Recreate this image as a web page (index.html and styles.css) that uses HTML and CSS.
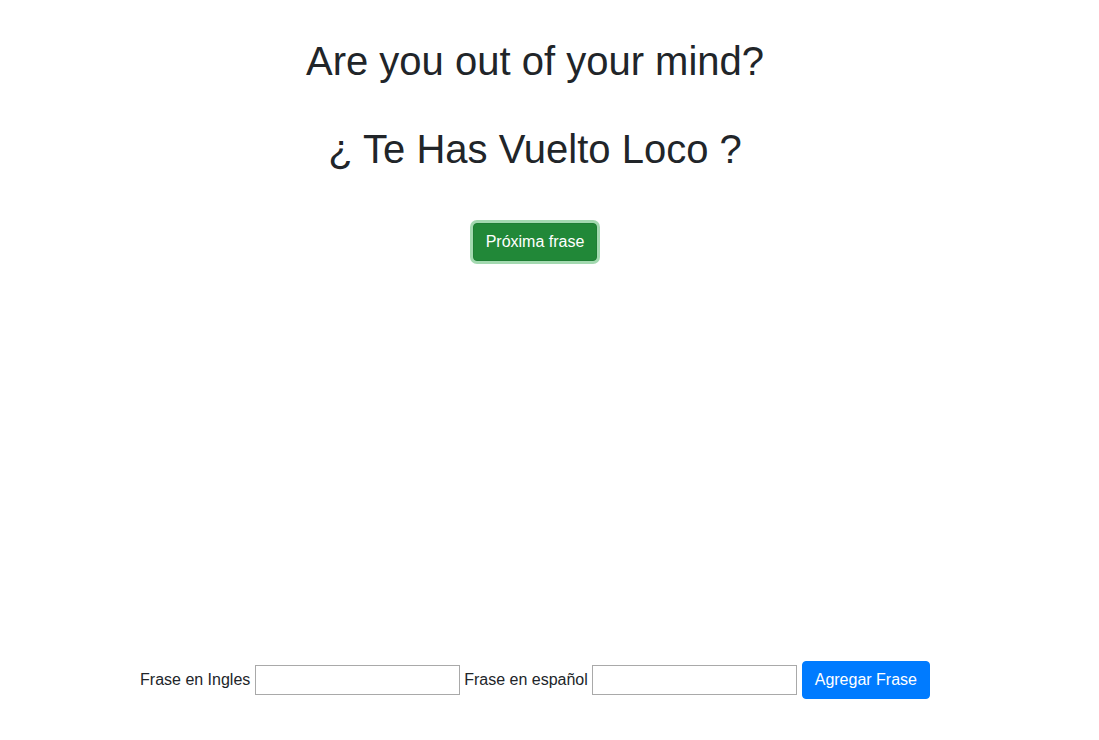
FILE: index.html
```html
<!DOCTYPE html>
<html lang="es">
<head>
<meta charset="utf-8">
<title>Frases</title>
<link rel="stylesheet" href="styles.css">
</head>
<body>
<div class="page">
  <main class="phrase">
    <h1 class="title">Are you out of your mind?</h1>
    <h1 class="title title-es">¿ Te Has Vuelto Loco ?</h1>
    <button class="btn btn-success" type="button">Próxima frase</button>
  </main>
  <form class="add-form">
    <label for="en">Frase en Ingles</label>
    <input id="en" type="text" class="field">
    <label for="es">Frase en español</label>
    <input id="es" type="text" class="field">
    <button class="btn btn-primary" type="button">Agregar Frase</button>
  </form>
</div>
</body>
</html>
```

FILE: styles.css
```css
html, body {
  margin: 0;
  padding: 0;
  background: #fff;
}
body {
  font-family: "Liberation Sans", Arial, sans-serif;
  font-size: 16px;
  line-height: 1.5;
  color: #212529;
}
.page {
  width: 1070px;
  height: 740px;
  display: flex;
  flex-direction: column;
  align-items: center;
}
.phrase {
  display: flex;
  flex-direction: column;
  align-items: center;
  padding-top: 37px;
}
.title {
  margin: 0;
  font-size: 40px;
  font-weight: 400;
  line-height: 48px;
}
.title-es {
  margin-top: 40px;
}
.btn {
  font-family: inherit;
  font-size: 16px;
  line-height: 24px;
  padding: 6px 12px;
  border: 1px solid transparent;
  border-radius: 4px;
  color: #fff;
  cursor: pointer;
}
.btn-success {
  margin-top: 50px;
  background: #218838;
  border-color: #1e7e34;
  box-shadow: 0 0 0 3px rgba(72, 180, 97, 0.5);
}
.btn-primary {
  background: #007bff;
  border-color: #007bff;
}
.add-form {
  margin-top: auto;
  margin-bottom: 41px;
  display: flex;
  align-items: center;
  gap: 4.45px;
}
.add-form label {
  line-height: 24px;
}
.field {
  width: 205px;
  height: 30px;
  box-sizing: border-box;
  border: 1px solid #a9a9a9;
  border-radius: 0;
  padding: 1px 2px;
  font-family: inherit;
  font-size: 13px;
  margin: 0;
}
```
